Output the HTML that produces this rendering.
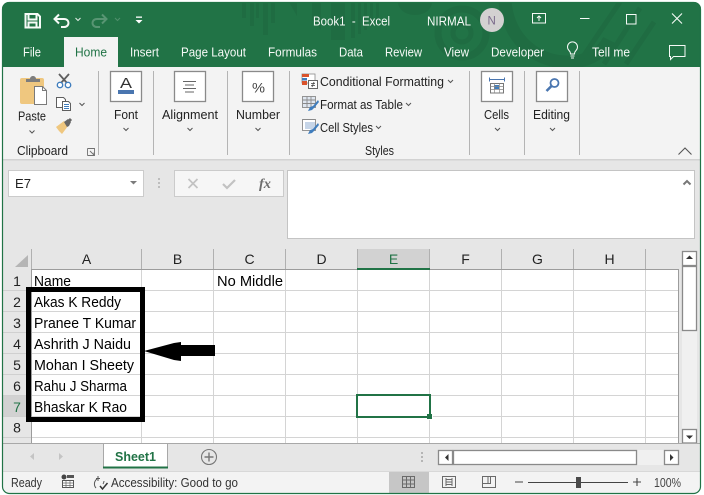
<!DOCTYPE html>
<html><head><meta charset="utf-8"><title>Book1 - Excel</title>
<style>
html,body{margin:0;padding:0;background:#fff;width:704px;height:495px;overflow:hidden}
svg{display:block}
text{font-family:"Liberation Sans",sans-serif;font-size:13px;fill:#222}
.w text{fill:#f6faf7}
.t text{font-size:13px}
.c text{font-size:14.5px;fill:#000}
.h text{font-size:14px;fill:#222;text-anchor:middle}
.g{stroke:#d4d4d4;stroke-width:1;fill:none}
.s{stroke:#b4b4b4;stroke-width:1;fill:none}
.b{fill:#fff;stroke:#8a8a8a;stroke-width:1.3}
.ch{fill:none;stroke:#555;stroke-width:1}
</style></head><body>
<svg width="704" height="495" viewBox="0 0 704 495" xmlns="http://www.w3.org/2000/svg">
<clipPath id="win"><rect x="2" y="2" width="699" height="491.5" rx="7"/></clipPath>
<rect width="704" height="495" fill="#fff"/>
<g clip-path="url(#win)">
<rect x="2" y="2" width="699" height="492" fill="#e6e6e6"/>
<!-- title band -->
<rect x="2" y="2" width="699" height="65" fill="#217346"/>
<g fill="#1f6c42">
<rect x="242" y="2" width="4" height="16"/><rect x="250" y="2" width="4" height="24"/><rect x="256" y="2" width="3" height="16"/><rect x="263" y="2" width="5" height="33"/><rect x="271" y="2" width="4" height="21"/>
<path d="M289 2h8v14z"/><path d="M312 2h9v28l-9-10z"/><rect x="331" y="2" width="14" height="38"/><rect x="351" y="2" width="4" height="36"/><rect x="358" y="2" width="3" height="32"/><rect x="364" y="2" width="3" height="28"/><rect x="370" y="2" width="3" height="24"/><rect x="376" y="2" width="3" height="18"/>
<path d="M398 2h34a17 13 0 0 1-34 0z"/>
</g>
<g fill="none" stroke="#1f6c42">
<circle cx="462" cy="33" r="24" stroke-width="7"/><circle cx="462" cy="33" r="9" stroke-width="5"/>
<path d="M505 2c4 40 34 62 68 60 18-2 30-10 36-22" stroke-width="13"/>
<path d="M620 2l-42 62M640 8l-36 56M654 22l-28 42" stroke-width="5"/>
</g>
<!-- ribbon -->
<rect x="2" y="67" width="699" height="92" fill="#f3f3f3"/>
<rect x="2" y="159" width="699" height="1.5" fill="#d2d2d2"/>
<rect x="64" y="37" width="54" height="31" fill="#f3f3f3"/>
<!-- QAT -->
<path d="M25.500 14h12l2.500 2.500V27.500H25.500z M28.500 14.500v5h8v-5 M28.500 27.500v-5h8v5" fill="none" stroke="#f6faf7" stroke-width="2"/>
<path d="M59 14.500l-4.500 4.500 4.500 4.500M55 19h9c6 0 6 8 0 8h-3" fill="none" stroke="#f6faf7" stroke-width="2"/>
<path d="M75.500 18l2.500 2.500 2.500-2.500" fill="none" stroke="#dfe9e3" stroke-width="1.100"/>
<path d="M102 14.500l4.500 4.500-4.500 4.500M106 19h-9c-6 0-6 8 0 8h3" fill="none" stroke="#589573" stroke-width="2"/>
<path d="M115 18l2.500 2.500 2.500-2.500" fill="none" stroke="#4f8f6c" stroke-width="1.100"/>
<rect x="136" y="16.500" width="6" height="1.300" fill="#fff"/><path d="M135.500 20h7l-3.500 3.500z" fill="#fff"/>
<!-- title text -->
<g class="w">
<text x="313" y="25.500" textLength="77" lengthAdjust="spacingAndGlyphs" xml:space="preserve">Book1  -  Excel</text>
<text x="427" y="25.500" textLength="44" lengthAdjust="spacingAndGlyphs">NIRMAL</text>
</g>
<circle cx="492" cy="20" r="12" fill="#d3d1d1"/>
<text x="487.500" y="24.500" style="font-size:11.500px;fill:#7a6a8a">N</text>
<g fill="none" stroke="#f6faf7" stroke-width="1">
<rect x="532.500" y="13.500" width="13" height="9.500"/><path d="M539 21v-5M537 18l2-2 2 2"/>
<path d="M580 18.500h9.500"/>
<rect x="626.500" y="14.500" width="9.500" height="9.500"/>
<path d="M672 13.500l10 10M682 13.500l-10 10" stroke-width="1.100"/>
<path d="M669.500 45.500h15.500v11h-11.500l-3 3v-3h-1z"/>
<path d="M569 50.500a5 5 0 1 1 7 0c-1 1-1.500 2-1.500 3.500h-4c0-1.500-.5-2.500-1.500-3.500zM570.500 56h4M571 58h3"/>
</g>
<!-- tabs -->
<g class="w t">
<text x="23" y="56.500" textLength="18" lengthAdjust="spacingAndGlyphs">File</text>
<text x="130" y="56.500" textLength="29" lengthAdjust="spacingAndGlyphs">Insert</text>
<text x="181" y="56.500" textLength="65" lengthAdjust="spacingAndGlyphs">Page Layout</text>
<text x="268" y="56.500" textLength="49" lengthAdjust="spacingAndGlyphs">Formulas</text>
<text x="339" y="56.500" textLength="24" lengthAdjust="spacingAndGlyphs">Data</text>
<text x="385" y="56.500" textLength="37" lengthAdjust="spacingAndGlyphs">Review</text>
<text x="444" y="56.500" textLength="25" lengthAdjust="spacingAndGlyphs">View</text>
<text x="491" y="56.500" textLength="53" lengthAdjust="spacingAndGlyphs">Developer</text>
<text x="592" y="56.500" textLength="38" lengthAdjust="spacingAndGlyphs">Tell me</text>
</g>
<text x="75" y="56.500" textLength="32" lengthAdjust="spacingAndGlyphs" style="fill:#217346">Home</text>
<!-- separators -->
<g class="s">
<path d="M98.500 71v84M153.500 71v84M227.500 71v84M289.500 71v84M469.500 71v84M524.500 71v84M579.500 71v84"/>
</g>
<!-- Paste icon -->
<rect x="20" y="78" width="24" height="26" rx="2" fill="#efc77f"/>
<path d="M26 82v-3h4c0-4 6-4 6 0h4v3z" fill="#7d7d7d"/>
<path d="M34.500 86.500h8l4 4v14h-12z" fill="#fff" stroke="#7a7a7a"/>
<path d="M42.500 86.500v4h4" fill="none" stroke="#7a7a7a"/>
<!-- scissors -->
<path d="M59 74l8 9M69 74l-8 9" stroke="#5f5f5f" stroke-width="1.800" fill="none"/>
<circle cx="60" cy="85" r="2.700" fill="#fff" stroke="#3f7dbd" stroke-width="1.400"/>
<circle cx="68" cy="85" r="2.700" fill="#fff" stroke="#3f7dbd" stroke-width="1.400"/>
<!-- copy -->
<path d="M56.500 97.500h7l2 2v8h-9z" fill="#fff" stroke="#5f5f5f"/>
<path d="M62.500 101.500h6l2 2v7h-8z" fill="#fff" stroke="#5f5f5f"/>
<path d="M64 104.500h5M64 106.500h5M64 108.500h5" stroke="#3f7dbd"/>
<path d="M79.500 103l2.500 2.500 2.500-2.500" class="ch"/>
<!-- brush -->
<path d="M56 127l8-6 4 5-6 8-3-3z" fill="#efc77f"/>
<path d="M64 122l4-3 3 3-2 4-2 1z" fill="#666"/>
<path d="M68 122l3-3" stroke="#666" stroke-width="3"/>
<!-- labels -->
<text x="18" y="120.500" textLength="28" lengthAdjust="spacingAndGlyphs">Paste</text>
<path d="M29.500 130.500l2.500 2.500 2.500-2.500" class="ch"/>
<text x="17" y="155" textLength="51" lengthAdjust="spacingAndGlyphs">Clipboard</text>
<path d="M87.500 148.500h7v7h-7M87.500 148.500v7M90 151l4 4M94 152.500v3h-3" fill="none" stroke="#707070" stroke-width=".9"/>
<!-- big buttons -->
<rect class="b" x="110.500" y="71.500" width="31" height="30"/>
<rect class="b" x="174.500" y="71.500" width="31" height="30"/>
<rect class="b" x="242.500" y="71.500" width="31" height="30"/>
<rect class="b" x="481.500" y="71.500" width="31" height="30"/>
<rect class="b" x="536.500" y="71.500" width="31" height="30"/>
<text x="120" y="88" style="font-size:15px;fill:#333" textLength="12" lengthAdjust="spacingAndGlyphs">A</text>
<rect x="118" y="90" width="16" height="4" fill="#4a76b0"/>
<path d="M183 81.500h13M185 85h9M183 88.500h13M185 92h9" stroke="#666" stroke-width="1" fill="none"/>
<text x="252" y="92.500" style="font-size:13.500px;fill:#444" textLength="13" lengthAdjust="spacingAndGlyphs">%</text>
<!-- cells icon -->
<path d="M489.500 79.500h15M489.500 77.500v4M504.500 77.500v4" stroke="#4a76b0" fill="none"/>
<rect x="490.500" y="83.500" width="13" height="9.500" fill="#fff" stroke="#777"/>
<rect x="494" y="85" width="5" height="4" fill="#3f7dbd"/>
<path d="M490.500 86.500h13M490.500 89.500h13M494.500 83.500v9.500M499.500 83.500v9.500" stroke="#888" stroke-width=".7" fill="none"/>
<!-- search icon -->
<circle cx="554.500" cy="83" r="4" fill="#fff" stroke="#4a76b0" stroke-width="1.800"/>
<path d="M551.500 86l-5 5" stroke="#4a76b0" stroke-width="2.600"/>
<text x="114" y="119" textLength="24" lengthAdjust="spacingAndGlyphs">Font</text>
<text x="162" y="119" textLength="56" lengthAdjust="spacingAndGlyphs">Alignment</text>
<text x="236" y="119" textLength="44" lengthAdjust="spacingAndGlyphs">Number</text>
<text x="484" y="119" textLength="25" lengthAdjust="spacingAndGlyphs">Cells</text>
<text x="533" y="119" textLength="37" lengthAdjust="spacingAndGlyphs">Editing</text>
<path d="M123.500 128l2.500 2.500 2.500-2.500M187.500 128l2.500 2.500 2.500-2.500M255.500 128l2.500 2.500 2.500-2.500M495 128l2.500 2.500 2.500-2.500M550 128l2.500 2.500 2.500-2.500" class="ch"/>
<!-- styles -->
<rect x="302" y="74" width="13" height="9" fill="#fff" stroke="#8a8a8a" stroke-width=".8"/>
<rect x="302" y="74" width="7" height="3" fill="#d9532c"/><rect x="302" y="78" width="5" height="2.500" fill="#3f7dbd"/><rect x="302" y="81" width="5" height="4" fill="#d9532c"/>
<rect x="308.500" y="80.500" width="9" height="8" fill="#fff" stroke="#666"/>
<path d="M311 83.500h4M311 85.500h4M312 87l2-5" stroke="#444" stroke-width=".8"/>
<text x="320" y="86" textLength="124" lengthAdjust="spacingAndGlyphs">Conditional Formatting</text>
<path d="M448 80l2.500 2.500 2.500-2.500M406 103l2.500 2.500 2.500-2.500M376 126l2.500 2.500 2.500-2.500" class="ch" stroke-width=".9"/>
<g fill="none" stroke="#8a8a8a" stroke-width=".9">
<rect x="302.500" y="96.500" width="13" height="11" fill="#dfe6ef"/><path d="M302.500 100h13M302.500 103.500h13M307 96.500v11M311 96.500v11"/>
<rect x="302.500" y="119.500" width="13" height="11" fill="#fff"/><path d="M302.500 119.500h13"/>
</g>
<rect x="305" y="122" width="10" height="7" fill="#c6d5e8"/>
<path d="M318 100l-5 6-3 1-2 4 4-1 2-2 5-6zM318 123l-5 6-3 1-2 4 4-1 2-2 5-6z" fill="#3f7dbd"/>
<text x="320" y="109" textLength="83" lengthAdjust="spacingAndGlyphs">Format as Table</text>
<text x="320" y="132" textLength="53" lengthAdjust="spacingAndGlyphs">Cell Styles</text>
<text x="365" y="155" textLength="29" lengthAdjust="spacingAndGlyphs">Styles</text>
<path d="M678.500 154.500l6.500-6.500 6.500 6.500" fill="none" stroke="#555" stroke-width="1.100"/>
<!-- formula bar -->
<rect x="8.500" y="170.500" width="135" height="26" fill="#fff" stroke="#cbcbcb"/>
<text x="15" y="188" textLength="16" lengthAdjust="spacingAndGlyphs" style="font-size:13px">E7</text>
<path d="M130 181h7l-3.500 3.500z" fill="#7b7b7b"/>
<rect x="158" y="178" width="2" height="2" fill="#bdbdbd"/><rect x="158" y="182" width="2" height="2" fill="#bdbdbd"/><rect x="158" y="186" width="2" height="2" fill="#bdbdbd"/>
<rect x="174.500" y="170.500" width="109" height="26" fill="#f6f6f6" stroke="#cbcbcb"/>
<path d="M188.500 179l9 9M197.500 179l-9 9" stroke="#c2c2c2" stroke-width="1.700" fill="none"/>
<path d="M223 184l4 4 8-8" stroke="#c2c2c2" stroke-width="2.200" fill="none"/>
<text x="259" y="188" style="font-family:'Liberation Serif',serif;font-size:13.500px;font-style:italic;font-weight:bold;fill:#6d6d6d" textLength="12" lengthAdjust="spacingAndGlyphs">fx</text>
<rect x="287.500" y="170.500" width="407" height="68" fill="#fff" stroke="#c4c4c4"/>
<path d="M683.500 184.500l3.500-3.500 3.500 3.500" fill="none" stroke="#777" stroke-width="2"/>
<!-- grid -->
<rect x="3" y="249" width="679" height="20" fill="#e6e6e6"/>
<rect x="32" y="270" width="646" height="173" fill="#fff"/>
<rect x="358" y="249" width="71" height="20" fill="#d2d2d2"/>
<rect x="3" y="396" width="28" height="20" fill="#d2d2d2"/>
<path d="M15 267l13-12v12z" fill="#b5b5b5"/>
<g class="g">
<path d="M141.500 270v173M213.500 270v173M285.500 270v173M357.500 270v173M429.500 270v173M501.500 270v173M573.500 270v173M645.500 270v173"/>
<path d="M32 290.500h646M32 311.500h646M32 332.500h646M32 353.500h646M32 374.500h646M32 395.500h646M32 416.500h646M32 437.500h646"/>
</g>
<g stroke="#b0b0b0" fill="none">
<path d="M31.500 249v21M141.500 249v20M213.500 249v20M285.500 249v20M357.500 249v20M429.500 249v20M501.500 249v20M573.500 249v20M645.500 249v20"/>
<path d="M3 290.500h28M3 311.500h28M3 332.500h28M3 353.500h28M3 374.500h28M3 395.500h28M3 416.500h28M3 437.500h28" stroke="#d0d0d0"/>
</g>
<path d="M31.500 269.500h647.500M31.500 269v174M678.500 269v174" fill="none" stroke="#9c9c9c"/>
<rect x="357" y="268" width="73" height="2" fill="#217346"/>
<g class="h">
<text x="86.500" y="264">A</text><text x="177.500" y="264">B</text><text x="249.500" y="264">C</text><text x="321.500" y="264">D</text>
<text x="393.500" y="264" style="fill:#217346">E</text><text x="465.500" y="264">F</text><text x="537.500" y="264">G</text><text x="609.500" y="264">H</text>
<text x="17" y="286">1</text><text x="17" y="307">2</text><text x="17" y="328">3</text><text x="17" y="349">4</text><text x="17" y="370">5</text><text x="17" y="391">6</text>
<text x="17" y="412" style="fill:#217346">7</text><text x="17" y="432.500">8</text>
</g>
<g class="c">
<text x="34" y="286" textLength="37" lengthAdjust="spacingAndGlyphs">Name</text>
<text x="217" y="286" textLength="66" lengthAdjust="spacingAndGlyphs">No Middle</text>
<text x="34" y="307" textLength="87" lengthAdjust="spacingAndGlyphs">Akas K Reddy</text>
<text x="34" y="328" textLength="102" lengthAdjust="spacingAndGlyphs">Pranee T Kumar</text>
<text x="34" y="349" textLength="97" lengthAdjust="spacingAndGlyphs">Ashrith J Naidu</text>
<text x="34" y="370" textLength="100" lengthAdjust="spacingAndGlyphs">Mohan I Sheety</text>
<text x="34" y="391" textLength="93" lengthAdjust="spacingAndGlyphs">Rahu J Sharma</text>
<text x="34" y="412" textLength="93" lengthAdjust="spacingAndGlyphs">Bhaskar K Rao</text>
</g>
<!-- annotations -->
<rect x="28.500" y="289.500" width="114" height="130" fill="none" stroke="#000" stroke-width="5"/>
<path d="M144 351l30-8 7-1v3h34v11h-34v5l-7-1z" fill="#000"/>
<!-- selection -->
<rect x="357" y="395" width="73" height="22" fill="none" stroke="#217346" stroke-width="2"/>
<rect x="427" y="414" width="6" height="6" fill="#fff"/>
<rect x="427" y="414" width="5" height="5" fill="#217346"/>
<!-- v scrollbar -->
<rect x="679" y="249" width="21" height="194" fill="#e6e6e6"/>
<rect x="682" y="251" width="15" height="192" fill="#f0f0f0"/>
<rect class="b" x="682.500" y="251.500" width="14" height="14" stroke="#9c9c9c"/>
<rect class="b" x="682.500" y="266.500" width="14" height="64" stroke="#9c9c9c"/>
<rect class="b" x="682.500" y="429.500" width="14" height="13.500" stroke="#9c9c9c"/>
<path d="M686 259l3.500-3.500 3.500 3.500z" fill="#333"/>
<path d="M686 435.500h7l-3.500 3.500z" fill="#333"/>
<!-- tab bar -->
<rect x="3" y="443" width="697" height="28" fill="#e6e6e6"/>
<path d="M3 443.500h697" stroke="#a8a8a8"/>
<path d="M103.500 443.500v24M167.500 443.500v24" stroke="#a8a8a8"/>
<rect x="104" y="444" width="63" height="23" fill="#fff"/>
<rect x="103" y="466.500" width="65" height="2" fill="#217346"/>
<text x="115" y="461" textLength="41" lengthAdjust="spacingAndGlyphs" style="font-weight:bold;font-size:13px;fill:#217346">Sheet1</text>
<path d="M34 453v7l-4-3.500zM59 453v7l4-3.500z" fill="#c4c4c4"/>
<circle cx="209" cy="457" r="7.500" fill="none" stroke="#777" stroke-width="1.100"/>
<path d="M209 452.500v9M204.500 457h9" stroke="#777" stroke-width="1.400"/>
<rect x="421" y="452" width="2" height="2" fill="#b5b5b5"/><rect x="421" y="456" width="2" height="2" fill="#b5b5b5"/><rect x="421" y="460" width="2" height="2" fill="#b5b5b5"/>
<rect x="438" y="450" width="241" height="15" fill="#f0f0f0"/>
<rect class="b" x="438.500" y="450.500" width="14" height="14" stroke="#9c9c9c"/>
<rect class="b" x="453.500" y="450.500" width="183" height="14" stroke="#9c9c9c"/>
<rect class="b" x="664.500" y="450.500" width="14" height="14" stroke="#9c9c9c"/>
<path d="M448.500 454v7l-3.500-3.500z" fill="#333"/>
<path d="M670 454v7l3.500-3.500z" fill="#333"/>
<!-- status bar -->
<rect x="3" y="471" width="697" height="23" fill="#f3f3f3"/>
<path d="M3 471.500h697" stroke="#d8d8d8"/>
<text x="11" y="487" textLength="31" lengthAdjust="spacingAndGlyphs" style="font-size:12.500px;fill:#333">Ready</text>
<circle cx="64" cy="477" r="2.500" fill="#444"/>
<rect x="67" y="475" width="7" height="3" fill="#555"/>
<rect x="62.500" y="480.500" width="11" height="7" fill="#fff" stroke="#555"/>
<path d="M62.500 483h11M62.500 485.500h11M66 480.500v7M70 480.500v7" stroke="#666" stroke-width=".7"/>
<path d="M97 479a6 6 0 0 0-1 9M98 476v5M96 478.500h4M104 481a6 6 0 0 1-1 3" fill="none" stroke="#555"/>
<path d="M100 486l2.500 3 5-6" fill="none" stroke="#333" stroke-width="1.500"/>
<text x="111" y="487" textLength="127" lengthAdjust="spacingAndGlyphs" style="font-size:12.500px;fill:#333">Accessibility: Good to go</text>
<rect x="389" y="472" width="40" height="21" fill="#c6c6c6"/>
<g fill="none" stroke="#6a6a6a">
<rect x="402.500" y="476.500" width="12" height="11"/><path d="M402.500 480h12M402.500 484h12M406.500 476.500v11M410.500 476.500v11"/>
<rect x="442.500" y="476.500" width="13" height="11"/><path d="M446 479.500h6M446 482h6M446 484.500h6M446 478v8M452 478v8"/>
<rect x="482.500" y="476.500" width="13" height="11"/><path d="M482.500 483.500h5.500v-7M488 483.500h2.500v-7"/>
</g>
<path d="M515 482h8M633 482h8M637 478v8" stroke="#444" stroke-width="1.100"/>
<path d="M528 482.500h100" stroke="#444"/>
<rect x="576" y="477" width="5" height="11" fill="#4a4a4a"/>
<text x="654" y="487" textLength="27" lengthAdjust="spacingAndGlyphs" style="font-size:12.500px;fill:#444">100%</text>
</g>
<rect x="2.500" y="2.500" width="698" height="491" rx="7" fill="none" stroke="#217346" stroke-width="1.200"/>
</svg>
</body></html>
